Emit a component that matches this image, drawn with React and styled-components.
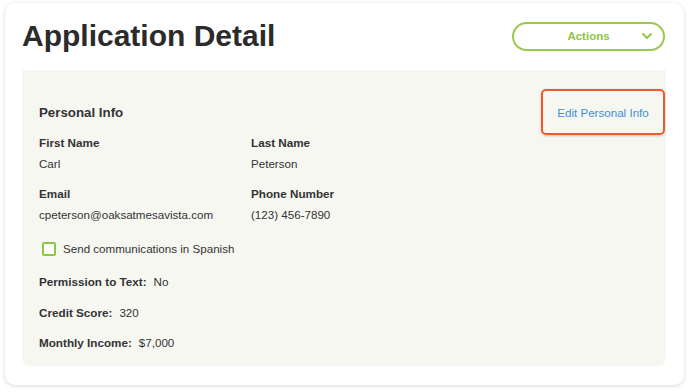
import React from 'react';
import styled, { createGlobalStyle } from 'styled-components';

const GlobalStyle = createGlobalStyle`
  html, body {
    margin: 0;
    padding: 0;
    background: #ffffff;
  }
  body {
    font-family: "Liberation Sans", Arial, sans-serif;
    color: #333333;
  }
`;

const Page = styled.div`
  width: 688px;
  height: 392px;
  padding: 3px 4px 0 5px;
  box-sizing: border-box;
`;

const Card = styled.div`
  background: #fff;
  border-radius: 10px;
  box-shadow: 0 1px 4px rgba(0, 0, 0, 0.16);
  padding: 19px 18px 19px 17px;
  box-sizing: border-box;
  height: 382px;
  display: flex;
  flex-direction: column;
`;

const Header = styled.div`
  display: flex;
  align-items: center;
  justify-content: space-between;
  height: 28px;
  margin-bottom: 20px;
`;

const Title = styled.h1`
  margin: 0;
  font-size: 30px;
  font-weight: 700;
  line-height: 28px;
  color: #2b2b2b;
`;

const ActionsButton = styled.button`
  width: 153px;
  height: 29px;
  border: 2px solid #9cc94f;
  border-radius: 15px;
  background: #fff;
  color: #8cc63f;
  font-family: inherit;
  font-size: 11.5px;
  font-weight: 700;
  position: relative;
  padding: 0;
  margin-right: 1px;
  cursor: pointer;

  svg {
    position: absolute;
    right: 11px;
    top: 50%;
    transform: translateY(-50%);
  }
`;

const Panel = styled.div`
  flex: 1;
  background: #f7f7f2;
  border-radius: 0 0 8px 8px;
  padding: 19px 1px 0 17px;
`;

const PanelHeader = styled.div`
  display: flex;
  align-items: center;
  justify-content: space-between;
  height: 46px;
  margin-bottom: 1px;
`;

const SectionTitle = styled.h2`
  margin: 0;
  font-size: 13.3px;
  font-weight: 700;
  color: #333;
`;

const EditLink = styled.a`
  display: flex;
  align-items: center;
  justify-content: center;
  width: 124px;
  height: 46px;
  box-sizing: border-box;
  border: 2px solid #f05a28;
  border-radius: 5px;
  box-shadow: 0 1px 3px rgba(0, 0, 0, 0.2);
  color: #3b8fd8;
  font-size: 11.6px;
  text-decoration: none;
  cursor: pointer;
`;

const FieldGrid = styled.div`
  display: grid;
  grid-template-columns: 212px 1fr;
  row-gap: 16px;
`;

const Field = styled.div`
  display: flex;
  flex-direction: column;
  gap: 7px;
`;

const Label = styled.div`
  font-size: 11.7px;
  font-weight: 700;
  line-height: 14px;
`;

const Value = styled.div`
  font-size: 11.6px;
  line-height: 14px;
`;

const CheckRow = styled.label`
  display: flex;
  align-items: center;
  gap: 7px;
  margin: 20px 0 0 3px;
  font-size: 11.6px;
  line-height: 14px;
`;

const Checkbox = styled.span`
  width: 14px;
  height: 14px;
  box-sizing: border-box;
  border: 2px solid #8dc63f;
  border-radius: 2px;
  background: #fff;
`;

const InlineList = styled.div`
  display: flex;
  flex-direction: column;
  gap: 16.5px;
  margin-top: 19px;
`;

const InlineField = styled.div`
  display: flex;
  gap: 7px;
  font-size: 11.6px;
  line-height: 14px;
`;

const InlineLabel = styled.span`
  font-weight: 700;
  font-size: 11.7px;
`;

const fields = [
  { label: 'First Name', value: 'Carl' },
  { label: 'Last Name', value: 'Peterson' },
  { label: 'Email', value: 'cpeterson@oaksatmesavista.com' },
  { label: 'Phone Number', value: '(123) 456-7890' },
];

const inlineFields = [
  { label: 'Permission to Text:', value: 'No' },
  { label: 'Credit Score:', value: '320' },
  { label: 'Monthly Income:', value: '$7,000' },
];

const App = () => {
  return (
    <Page>
      <GlobalStyle />
      <Card>
        <Header>
          <Title>Application Detail</Title>
          <ActionsButton>
            Actions
            <svg width="10" height="6" viewBox="0 0 10 6" fill="none">
              <path d="M1 1l4 4 4-4" stroke="#8cc63f" strokeWidth="1.8" strokeLinecap="round" strokeLinejoin="round" />
            </svg>
          </ActionsButton>
        </Header>
        <Panel>
          <PanelHeader>
            <SectionTitle>Personal Info</SectionTitle>
            <EditLink>Edit Personal Info</EditLink>
          </PanelHeader>
          <FieldGrid>
            {fields.map((f) => (
              <Field key={f.label}>
                <Label>{f.label}</Label>
                <Value>{f.value}</Value>
              </Field>
            ))}
          </FieldGrid>
          <CheckRow>
            <Checkbox />
            Send communications in Spanish
          </CheckRow>
          <InlineList>
            {inlineFields.map((f) => (
              <InlineField key={f.label}>
                <InlineLabel>{f.label}</InlineLabel>
                <span>{f.value}</span>
              </InlineField>
            ))}
          </InlineList>
        </Panel>
      </Card>
    </Page>
  );
};

export default App;
